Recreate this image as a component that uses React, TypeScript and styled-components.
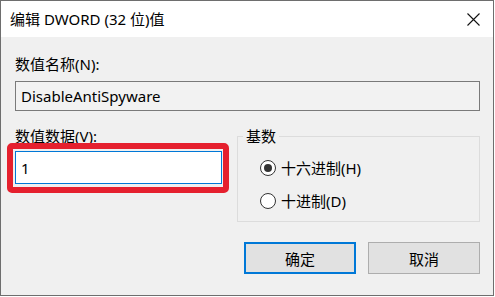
import React from "react";
import styled, { createGlobalStyle } from "styled-components";

const GlobalStyle = createGlobalStyle`
  html, body {
    margin: 0;
    padding: 0;
    background: #ffffff;
  }
  * {
    box-sizing: border-box;
  }
`;

const fontStack = `"Noto Sans", "Noto Sans CJK SC", sans-serif`;

const Window = styled.div`
  width: 494px;
  height: 296px;
  border: 1px solid #6e6e6e;
  background: #f0f0f0;
  display: flex;
  flex-direction: column;
  font-family: ${fontStack};
  font-size: 15px;
  color: #000;
`;

const TitleBar = styled.div`
  height: 36px;
  background: #ffffff;
  display: flex;
  align-items: center;
  padding-left: 9px;
`;

const Title = styled.span`
  flex: 1;
  line-height: 20px;
`;

const CloseButton = styled.button`
  width: 40px;
  height: 36px;
  border: 0;
  background: transparent;
  display: flex;
  align-items: center;
  justify-content: center;
  padding: 0;
`;

const Body = styled.div`
  flex: 1;
  display: flex;
  flex-direction: column;
  padding: 17px 13px 0 14px;
`;

const Label = styled.div`
  line-height: 20px;
  height: 20px;
`;

const TextBox = styled.div<{ $focused?: boolean }>`
  display: flex;
  align-items: center;
  padding-left: 5px;
  border: 1px solid ${(p) => (p.$focused ? "#0078d7" : "#7a7a7a")};
  background: ${(p) => (p.$focused ? "#ffffff" : "#f2f2f2")};
  line-height: 20px;
`;

const NameBox = styled(TextBox)`
  margin-top: 7px;
  height: 30px;
`;

const Row = styled.div`
  display: grid;
  grid-template-columns: 207px 243px;
  column-gap: 15px;
  margin-top: 15px;
`;

const Column = styled.div`
  display: flex;
  flex-direction: column;
`;

const Highlight = styled.div`
  position: relative;
  margin-top: 5px;

  &::after {
    content: "";
    position: absolute;
    top: -8px;
    left: -8px;
    right: -7px;
    bottom: -9px;
    border: 6px solid #e5202e;
    border-radius: 5px;
    pointer-events: none;
  }
`;

const DataBox = styled(TextBox)`
  height: 33px;
`;

const GroupBox = styled.fieldset`
  margin: 0;
  padding: 0 0 10px 5px;
  border: 1px solid #dcdcdc;
  min-width: 0;
`;

const Legend = styled.legend`
  padding: 0 3px;
  line-height: 20px;
`;

const RadioList = styled.div`
  display: flex;
  flex-direction: column;
  gap: 13px;
  padding-top: 12px;
  padding-left: 17px;
`;

const RadioRow = styled.label`
  display: flex;
  align-items: center;
  gap: 5px;
  height: 20px;
  line-height: 20px;
`;

const RadioCircle = styled.span<{ $checked?: boolean }>`
  width: 16px;
  height: 16px;
  border-radius: 50%;
  border: 1px solid #333333;
  background: #ffffff;
  display: flex;
  align-items: center;
  justify-content: center;

  &::after {
    content: "";
    width: 8px;
    height: 8px;
    border-radius: 50%;
    background: ${(p) => (p.$checked ? "#333333" : "transparent")};
  }
`;

const ButtonBar = styled.div`
  display: flex;
  justify-content: flex-end;
  gap: 12px;
  margin-top: 20px;
`;

const DialogButton = styled.button<{ $default?: boolean }>`
  width: 112px;
  height: 32px;
  font-family: ${fontStack};
  font-size: 15px;
  color: #000;
  background: #e1e1e1;
  border: ${(p) => (p.$default ? "2px solid #0078d7" : "1px solid #adadad")};
  padding: 0;
`;

function CloseIcon() {
  return (
    <svg width="13" height="13" viewBox="0 0 13 13">
      <path d="M0.5 0.5 L12.5 12.5 M12.5 0.5 L0.5 12.5" stroke="#111" strokeWidth="1.1" />
    </svg>
  );
}

export default function App() {
  return (
    <>
      <GlobalStyle />
      <Window>
        <TitleBar>
          <Title>编辑 DWORD (32 位)值</Title>
          <CloseButton aria-label="关闭">
            <CloseIcon />
          </CloseButton>
        </TitleBar>
        <Body>
          <Label>数值名称(N):</Label>
          <NameBox>DisableAntiSpyware</NameBox>
          <Row>
            <Column>
              <Label>数值数据(V):</Label>
              <Highlight>
                <DataBox $focused>1</DataBox>
              </Highlight>
            </Column>
            <GroupBox>
              <Legend>基数</Legend>
              <RadioList>
                <RadioRow>
                  <RadioCircle $checked />
                  十六进制(H)
                </RadioRow>
                <RadioRow>
                  <RadioCircle />
                  十进制(D)
                </RadioRow>
              </RadioList>
            </GroupBox>
          </Row>
          <ButtonBar>
            <DialogButton $default>确定</DialogButton>
            <DialogButton>取消</DialogButton>
          </ButtonBar>
        </Body>
      </Window>
    </>
  );
}
